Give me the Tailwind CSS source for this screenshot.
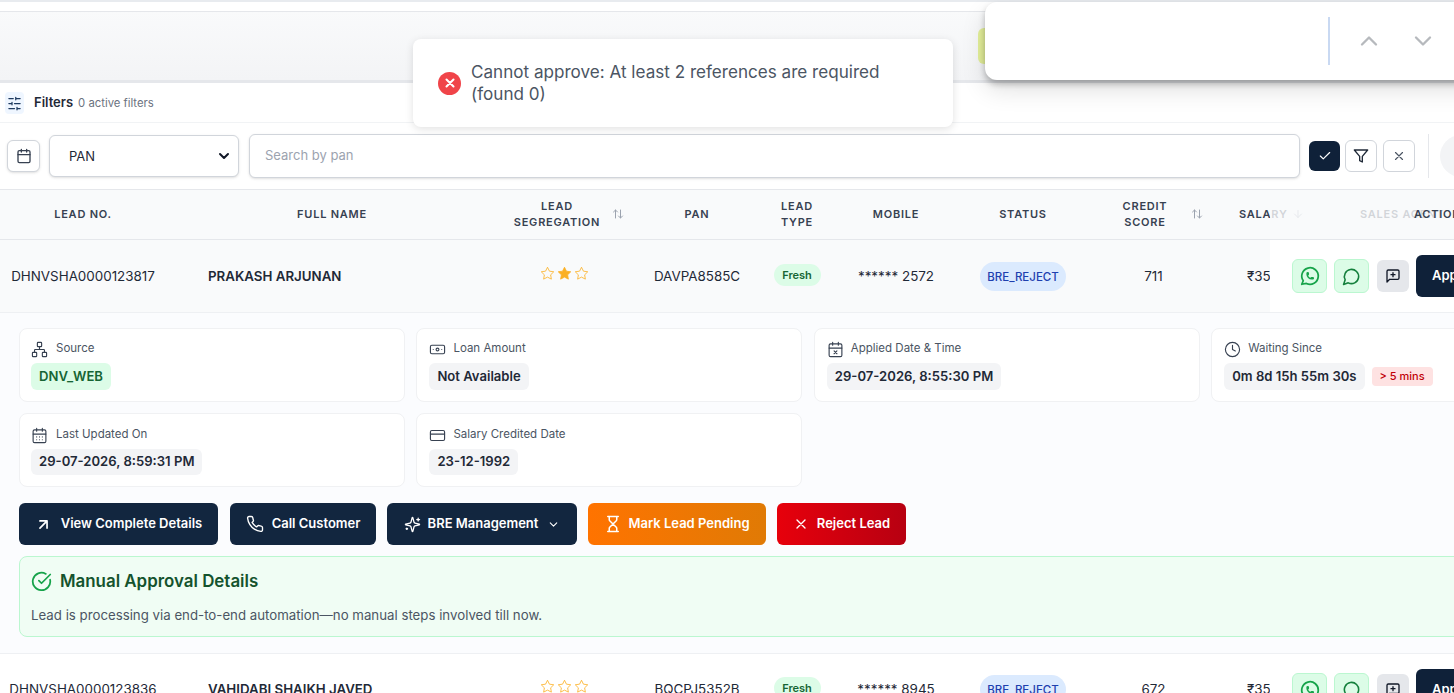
<!DOCTYPE html>
<html lang="en">
<head>
  <meta charset="UTF-8" />
  <meta name="viewport" content="width=device-width, initial-scale=1.0" />
  <title>Leads</title>
  <script src="https://cdn.jsdelivr.net/npm/@tailwindcss/browser@4"></script>
</head>
<body class="bg-white font-['Inter',sans-serif] text-[#1f2937]">
<div class="relative h-[693px] w-[1454px] overflow-hidden">

  <!-- top strip -->
  <div class="h-[2px] bg-[#e8ebef]"></div>
  <div class="h-[10px] border-b border-[#e5e7eb] bg-white"></div>
  <div class="h-[71px] border-b-[3px] border-[#e5e7eb] bg-gradient-to-b from-[#f9fafb] to-[#f3f4f6]"></div>

  <!-- filters bar -->
  <div class="flex h-[40px] items-center gap-[10px] border-b border-[#f1f3f5] pl-[5px] pt-[1px]">
    <span class="flex h-[22px] w-[19px] items-center justify-center rounded bg-[#eff6ff] text-[#1e3a5f]">
      <svg class="h-[15px] w-[15px]" viewBox="0 0 24 24" fill="none" stroke="currentColor" stroke-width="2" stroke-linecap="round"><path d="M21 4h-7M10 4H3M21 12h-9M8 12H3M21 20h-5M12 20H3M14 2v4M8 10v4M16 18v4"/></svg>
    </span>
    <span class="text-[13px] font-semibold text-[#1f2937]">Filters</span>
    <span class="-ml-[5px] text-[11.3px] text-[#6b7280]">0 active filters</span>
  </div>

  <!-- search row -->
  <div class="flex h-[67px] items-center border-b border-[#e5e7eb] pl-[7px]">
    <button class="flex h-[32px] w-[33px] shrink-0 items-center justify-center rounded-md border border-[#d1d5db] bg-white shadow-sm">
      <svg class="h-[16px] w-[16px]" viewBox="0 0 24 24" fill="none" stroke="#374151" stroke-width="2" stroke-linecap="round"><path d="M8 2v4M16 2v4M3 10h18"/><rect x="3" y="4" width="18" height="18" rx="2"/></svg>
    </button>
    <div class="ml-[9px] flex h-[42px] w-[190px] shrink-0 items-center justify-between rounded-md border border-[#d1d5db] bg-white pl-[19px] pr-[6px] shadow-sm">
      <span class="pt-[1px] text-[13px] text-[#1f2937]">PAN</span>
      <svg class="h-[16px] w-[16px]" viewBox="0 0 24 24" fill="none" stroke="#111827" stroke-width="3" stroke-linecap="round" stroke-linejoin="round"><path d="m6 9 6 6 6-6"/></svg>
    </div>
    <div class="ml-[10px] flex h-[44px] w-[1051px] shrink-0 items-center rounded-md border border-[#d1d5db] bg-white pl-[15px] shadow-sm">
      <span class="text-[13px] text-[#9ca3af]">Search by pan</span>
    </div>
    <button class="ml-[9px] flex h-[30px] w-[31px] shrink-0 items-center justify-center rounded-md bg-[#0f2139] text-white">
      <svg class="h-[14px] w-[14px]" viewBox="0 0 24 24" fill="none" stroke="currentColor" stroke-width="2" stroke-linecap="round" stroke-linejoin="round"><path d="M20 6 9 17l-5-5"/></svg>
    </button>
    <button class="ml-[5px] flex h-[32px] w-[32px] shrink-0 items-center justify-center rounded-md border border-[#d1d5db] bg-white">
      <svg class="h-[16px] w-[16px]" viewBox="0 0 24 24" fill="none" stroke="#1f2937" stroke-width="2" stroke-linecap="round" stroke-linejoin="round"><polygon points="22 3 2 3 10 12.46 10 19 14 21 14 12.46 22 3"/></svg>
    </button>
    <button class="ml-[6px] flex h-[32px] w-[32px] shrink-0 items-center justify-center rounded-md border border-[#d1d5db] bg-white">
      <svg class="h-[14px] w-[14px]" viewBox="0 0 24 24" fill="none" stroke="#4b5563" stroke-width="2" stroke-linecap="round"><path d="M18 6 6 18M6 6l12 12"/></svg>
    </button>
    <div class="ml-[13px] h-[44px] w-px shrink-0 bg-[#e5e7eb]"></div>
    <div class="ml-[11px] h-[42px] w-[42px] shrink-0 rounded-full bg-[#f3f4f6]"></div>
  </div>

  <!-- table head -->
  <div class="relative flex h-[50px] items-center border-b border-[#e5e7eb] bg-[#f9fafb] pb-[2px] text-center text-[11px] font-semibold uppercase leading-[16px] tracking-[0.07em] text-[#374151]">
    <div class="w-[166px]">Lead No.</div>
    <div class="w-[332px]">Full Name</div>
    <div class="flex w-[142px] items-center">
      <div class="ml-[8px] w-[102px]">Lead<br>Segregation</div>
      <svg class="ml-[4px] h-[12px] w-[12px] text-[#9ca3af]" viewBox="0 0 24 24" fill="none" stroke="currentColor" stroke-width="2" stroke-linecap="round" stroke-linejoin="round"><path d="m21 16-4 4-4-4M17 20V4M3 8l4-4 4 4M7 4v16"/></svg>
    </div>
    <div class="w-[114px]">Pan</div>
    <div class="w-[86px]">Lead<br>Type</div>
    <div class="w-[112px]">Mobile</div>
    <div class="w-[142px]">Status</div>
    <div class="flex w-[121px] items-center">
      <div class="ml-[21px] w-[60px]">Credit<br>Score</div>
      <svg class="ml-[16px] h-[12px] w-[12px] text-[#9ca3af]" viewBox="0 0 24 24" fill="none" stroke="currentColor" stroke-width="2" stroke-linecap="round" stroke-linejoin="round"><path d="m21 16-4 4-4-4M17 20V4M3 8l4-4 4 4M7 4v16"/></svg>
    </div>
    <div class="ml-[24px] flex w-[121px] shrink-0 items-center gap-[4px]">Salary
      <svg class="h-[12px] w-[12px] text-[#9ca3af]" viewBox="0 0 24 24" fill="none" stroke="currentColor" stroke-width="2" stroke-linecap="round" stroke-linejoin="round"><path d="M12 5v14M19 12l-7 7-7-7"/></svg>
    </div>
    <div class="shrink-0 whitespace-nowrap">Sales Agent</div>
    <div class="absolute inset-y-0 left-[1270px] right-0 bg-[#f9fafb]/80"></div>
    <div class="absolute left-[1414px] top-[16px] text-[#374151]">Action</div>
  </div>

  <!-- row 1 -->
  <div class="relative flex h-[73px] items-center border-b border-[#eef0f3] bg-[#f9fafb] pt-[1px] text-[13.4px] text-[#1f2937]">
    <div class="w-[166px] text-center">DHNVSHA0000123817</div>
    <div class="w-[332px] pl-[42px] text-[13.3px] font-semibold">PRAKASH ARJUNAN</div>
    <div class="flex w-[142px] justify-center gap-[2px] pb-[6px] pr-[10px] text-[#fbb024]">
      <svg class="h-[15px] w-[15px]" viewBox="0 0 24 24" fill="none" stroke="currentColor" stroke-width="1.3" stroke-linejoin="round"><polygon points="12 2 15.09 8.26 22 9.27 17 14.14 18.18 21.02 12 17.77 5.82 21.02 7 14.14 2 9.27 8.91 8.26 12 2"/></svg>
      <svg class="h-[15px] w-[15px]" viewBox="0 0 24 24" fill="currentColor" stroke="currentColor" stroke-width="1.3" stroke-linejoin="round"><polygon points="12 2 15.09 8.26 22 9.27 17 14.14 18.18 21.02 12 17.77 5.82 21.02 7 14.14 2 9.27 8.91 8.26 12 2"/></svg>
      <svg class="h-[15px] w-[15px]" viewBox="0 0 24 24" fill="none" stroke="currentColor" stroke-width="1.3" stroke-linejoin="round"><polygon points="12 2 15.09 8.26 22 9.27 17 14.14 18.18 21.02 12 17.77 5.82 21.02 7 14.14 2 9.27 8.91 8.26 12 2"/></svg>
    </div>
    <div class="w-[114px] text-center">DAVPA8585C</div>
    <div class="flex w-[86px] justify-center pb-[3px]"><span class="flex h-[22px] w-[47px] items-center justify-center rounded-full bg-[#dcfce7] text-[11px] font-semibold text-[#166534]">Fresh</span></div>
    <div class="w-[112px] text-center">****** 2572</div>
    <div class="flex w-[142px] justify-center"><span class="flex h-[29px] w-[86px] items-center justify-center rounded-full bg-[#dbeafe] pt-[2px] text-[11.5px] font-medium text-[#1e40af]">BRE_REJECT</span></div>
    <div class="w-[121px] pr-[2px] text-center">711</div>
    <div class="ml-[32px] shrink-0">₹35,000</div>
    <div class="absolute inset-y-0 left-[1270px] right-0 flex items-center bg-white pl-[22px]">
      <span class="flex h-[34px] w-[35px] shrink-0 items-center justify-center rounded-md border border-[#bbf7d0] bg-[#dcfce7] text-[#16a34a]">
        <svg class="h-[22px] w-[22px]" viewBox="0 0 24 24" fill="none" stroke="currentColor" stroke-width="1.9" stroke-linecap="round" stroke-linejoin="round"><path d="M3 21l1.65-3.8a9 9 0 1 1 3.4 2.9L3 21"/><path d="M9 10a.5.5 0 0 0 1 0V9a.5.5 0 0 0-1 0v1a5 5 0 0 0 5 5h1a.5.5 0 0 0 0-1h-1a.5.5 0 0 0 0 1"/></svg>
      </span>
      <span class="ml-[7px] flex h-[34px] w-[35px] shrink-0 items-center justify-center rounded-md border border-[#bbf7d0] bg-[#dcfce7] text-[#15803d]">
        <svg class="h-[19px] w-[19px]" viewBox="0 0 24 24" fill="none" stroke="currentColor" stroke-width="2" stroke-linecap="round" stroke-linejoin="round"><path d="M7.9 20A9 9 0 1 0 4 16.1L2 22Z"/></svg>
      </span>
      <span class="ml-[8px] flex h-[32px] w-[32px] shrink-0 items-center justify-center rounded-md bg-[#e5e7eb] text-[#111827]">
        <svg class="h-[16px] w-[16px]" viewBox="0 0 24 24" fill="none" stroke="currentColor" stroke-width="2" stroke-linecap="round" stroke-linejoin="round"><path d="M21 15a2 2 0 0 1-2 2H7l-4 4V5a2 2 0 0 1 2-2h14a2 2 0 0 1 2 2z"/><path d="M12 7v6M9 10h6"/></svg>
      </span>
      <span class="ml-[7px] flex h-[42px] w-[90px] shrink-0 items-center rounded-md bg-[#0f2139] pl-[16px] text-[13px] font-semibold text-white">Approve</span>
    </div>
  </div>

  <!-- expanded details -->
  <div class="h-[341px] border-b border-[#eef0f3] bg-[#fbfcfe] pl-[19px] pt-[15px]">
    <div class="grid w-[1578px] grid-cols-[386px_386px_386px_386px] gap-x-[11.4px] gap-y-[11px]">
      <div class="h-[74px] rounded-lg border border-[#f0f1f3] bg-white pl-[11px] pt-[11px]">
        <div class="flex h-[18px] items-center gap-[8px] text-[11.5px] text-[#4b5563]">
          <svg class="h-[17px] w-[17px]" viewBox="0 0 24 24" fill="none" stroke="#374151" stroke-width="1.6" stroke-linecap="round" stroke-linejoin="round"><rect x="16" y="16" width="6" height="6" rx="1"/><rect x="2" y="16" width="6" height="6" rx="1"/><rect x="9" y="2" width="6" height="6" rx="1"/><path d="M5 16v-3a1 1 0 0 1 1-1h12a1 1 0 0 1 1 1v3M12 12V8"/></svg>
          Source
        </div>
        <span class="mt-[5px] inline-flex h-[27px] items-center rounded-md bg-[#dcfce7] px-[8px] text-[13.1px] font-semibold text-[#166534]">DNV_WEB</span>
      </div>
      <div class="h-[74px] rounded-lg border border-[#f0f1f3] bg-white pl-[12px] pt-[11px]">
        <div class="flex h-[18px] items-center gap-[7px] text-[11.5px] text-[#4b5563]">
          <svg class="h-[17px] w-[17px]" viewBox="0 0 24 24" fill="none" stroke="#374151" stroke-width="1.6" stroke-linecap="round" stroke-linejoin="round"><rect x="2" y="6" width="20" height="12" rx="2"/><circle cx="12" cy="12" r="2"/><path d="M6 12h.01M18 12h.01"/></svg>
          Loan Amount
        </div>
        <span class="mt-[5px] inline-flex h-[27px] items-center rounded-md bg-[#f3f4f6] px-[8px] text-[13.1px] font-semibold">Not Available</span>
      </div>
      <div class="h-[74px] rounded-lg border border-[#f0f1f3] bg-white pl-[12px] pt-[11px]">
        <div class="flex h-[18px] items-center gap-[7px] text-[11.5px] text-[#4b5563]">
          <svg class="h-[17px] w-[17px]" viewBox="0 0 24 24" fill="none" stroke="#374151" stroke-width="1.6" stroke-linecap="round" stroke-linejoin="round"><path d="M8 2v4M16 2v4M3 10h18"/><rect x="3" y="4" width="18" height="18" rx="2"/><path d="m14 14-4 4M10 14l4 4"/></svg>
          Applied Date &amp; Time
        </div>
        <span class="mt-[5px] inline-flex h-[27px] items-center rounded-md bg-[#f3f4f6] px-[8px] text-[13.1px] font-semibold">29-07-2026, 8:55:30 PM</span>
      </div>
      <div class="h-[74px] rounded-lg border border-[#f0f1f3] bg-white pl-[12px] pt-[11px]">
        <div class="flex h-[18px] items-center gap-[7px] text-[11.5px] text-[#4b5563]">
          <svg class="h-[17px] w-[17px]" viewBox="0 0 24 24" fill="none" stroke="#374151" stroke-width="1.6" stroke-linecap="round" stroke-linejoin="round"><circle cx="12" cy="12" r="10"/><path d="M12 6v6l4 2"/></svg>
          Waiting Since
        </div>
        <div class="mt-[5px] flex items-center gap-[7px]">
          <span class="inline-flex h-[27px] items-center rounded-md bg-[#f3f4f6] px-[8px] text-[13.1px] font-semibold">0m 8d 15h 55m 30s</span>
          <span class="inline-flex h-[19px] items-center rounded bg-[#fee2e2] px-[8px] text-[11px] font-medium text-[#c10007]">&gt; 5 mins</span>
        </div>
      </div>
      <div class="h-[74px] rounded-lg border border-[#f0f1f3] bg-white pl-[11px] pt-[12px]">
        <div class="flex h-[18px] items-center gap-[8px] text-[11.5px] text-[#4b5563]">
          <svg class="h-[17px] w-[17px]" viewBox="0 0 24 24" fill="none" stroke="#374151" stroke-width="1.6" stroke-linecap="round" stroke-linejoin="round"><path d="M8 2v4M16 2v4M3 10h18"/><rect x="3" y="4" width="18" height="18" rx="2"/><path d="M8 14h.01M12 14h.01M16 14h.01M8 18h.01M12 18h.01M16 18h.01"/></svg>
          Last Updated On
        </div>
        <span class="mt-[5px] inline-flex h-[26px] items-center rounded-md bg-[#f3f4f6] px-[8px] text-[13.1px] font-semibold">29-07-2026, 8:59:31 PM</span>
      </div>
      <div class="h-[74px] rounded-lg border border-[#f0f1f3] bg-white pl-[12px] pt-[12px]">
        <div class="flex h-[18px] items-center gap-[7px] text-[11.5px] text-[#4b5563]">
          <svg class="h-[17px] w-[17px]" viewBox="0 0 24 24" fill="none" stroke="#374151" stroke-width="1.6" stroke-linecap="round" stroke-linejoin="round"><rect x="2" y="5" width="20" height="14" rx="2"/><path d="M2 10h20"/></svg>
          Salary Credited Date
        </div>
        <span class="mt-[5px] inline-flex h-[26px] items-center rounded-md bg-[#f3f4f6] px-[8px] text-[13.1px] font-semibold">23-12-1992</span>
      </div>
    </div>

    <!-- action buttons -->
    <div class="mt-[16px] flex gap-[11px] text-[13px] font-semibold text-white">
      <button class="mr-[1px] flex h-[42px] w-[199px] items-center justify-center gap-[9px] rounded-md bg-[#12263f]">
        <svg class="h-[17px] w-[17px]" viewBox="0 0 24 24" fill="none" stroke="currentColor" stroke-width="2.4" stroke-linecap="round" stroke-linejoin="round"><path d="M7 7h10v10M7 17 17 7"/></svg>
        View Complete Details
      </button>
      <button class="flex h-[42px] w-[146px] items-center justify-center gap-[8px] rounded-md bg-[#12263f]">
        <svg class="h-[18px] w-[18px]" viewBox="0 0 24 24" fill="none" stroke="currentColor" stroke-width="1.8" stroke-linecap="round" stroke-linejoin="round"><path d="M22 16.92v3a2 2 0 0 1-2.18 2 19.79 19.79 0 0 1-8.63-3.07 19.5 19.5 0 0 1-6-6 19.79 19.79 0 0 1-3.07-8.67A2 2 0 0 1 4.11 2h3a2 2 0 0 1 2 1.72 12.84 12.84 0 0 0 .7 2.81 2 2 0 0 1-.45 2.11L8.09 9.91a16 16 0 0 0 6 6l1.27-1.27a2 2 0 0 1 2.11-.45 12.84 12.84 0 0 0 2.81.7A2 2 0 0 1 22 16.92z"/></svg>
        Call Customer
      </button>
      <button class="flex h-[42px] w-[190px] items-center justify-center gap-[7px] rounded-md bg-[#12263f]">
        <svg class="h-[17px] w-[17px]" viewBox="0 0 24 24" fill="none" stroke="currentColor" stroke-width="1.8" stroke-linecap="round" stroke-linejoin="round"><path d="M9.937 15.5A2 2 0 0 0 8.5 14.063l-6.135-1.582a.5.5 0 0 1 0-.962L8.5 9.936A2 2 0 0 0 9.937 8.5l1.582-6.135a.5.5 0 0 1 .963 0L14.063 8.5A2 2 0 0 0 15.5 9.937l6.135 1.581a.5.5 0 0 1 0 .964L15.5 14.063a2 2 0 0 0-1.437 1.437l-1.582 6.135a.5.5 0 0 1-.963 0z"/><path d="M20 3v4M22 5h-4M4 17v2M5 18H3"/></svg>
        BRE Management
        <svg class="ml-[2px] h-[13px] w-[13px]" viewBox="0 0 24 24" fill="none" stroke="currentColor" stroke-width="2" stroke-linecap="round" stroke-linejoin="round"><path d="m6 9 6 6 6-6"/></svg>
      </button>
      <button class="flex h-[42px] w-[178px] items-center justify-center gap-[6px] rounded-md bg-gradient-to-r from-[#ff7300] to-[#e07a05]">
        <svg class="h-[18px] w-[18px]" viewBox="0 0 24 24" fill="none" stroke="currentColor" stroke-width="2" stroke-linecap="round" stroke-linejoin="round"><path d="M5 22h14M5 2h14M17 22v-4.172a2 2 0 0 0-.586-1.414L12 12l-4.414 4.414A2 2 0 0 0 7 17.828V22M7 2v4.172a2 2 0 0 0 .586 1.414L12 12l4.414-4.414A2 2 0 0 0 17 6.172V2"/></svg>
        Mark Lead Pending
      </button>
      <button class="flex h-[42px] w-[129px] items-center justify-center gap-[8px] rounded-md bg-gradient-to-r from-[#e7000b] to-[#b70011]">
        <svg class="h-[16px] w-[16px]" viewBox="0 0 24 24" fill="none" stroke="currentColor" stroke-width="2" stroke-linecap="round"><path d="M18 6 6 18M6 6l12 12"/></svg>
        Reject Lead
      </button>
    </div>

    <!-- manual approval -->
    <div class="mt-[11px] h-[81px] w-[1560px] rounded-lg border border-[#bbf7d0] bg-[#f0fdf4] pl-[11px] pt-[12px]">
      <div class="flex items-center gap-[8px] text-[16.9px] font-semibold text-[#14532d]">
        <svg class="h-[21px] w-[21px] text-[#16a34a]" viewBox="0 0 24 24" fill="none" stroke="currentColor" stroke-width="2" stroke-linecap="round" stroke-linejoin="round"><path d="M21.801 10A10 10 0 1 1 17 3.335"/><path d="m9 11 3 3L22 4"/></svg>
        Manual Approval Details
      </div>
      <p class="mt-[12px] text-[13.25px] text-[#4b5563]">Lead is processing via end-to-end automation—no manual steps involved till now.</p>
    </div>
  </div>

  <!-- row 2 -->
  <div class="relative flex h-[71px] items-center bg-white text-[13.4px] text-[#1f2937]">
    <div class="w-[166px] text-center">DHNVSHA0000123836</div>
    <div class="w-[332px] pl-[42px] text-[13.3px] font-semibold">VAHIDABI SHAIKH JAVED</div>
    <div class="flex w-[142px] justify-center gap-[2px] pb-[6px] pr-[10px] text-[#fbb024]">
      <svg class="h-[15px] w-[15px]" viewBox="0 0 24 24" fill="none" stroke="currentColor" stroke-width="1.3" stroke-linejoin="round"><polygon points="12 2 15.09 8.26 22 9.27 17 14.14 18.18 21.02 12 17.77 5.82 21.02 7 14.14 2 9.27 8.91 8.26 12 2"/></svg>
      <svg class="h-[15px] w-[15px]" viewBox="0 0 24 24" fill="none" stroke="currentColor" stroke-width="1.3" stroke-linejoin="round"><polygon points="12 2 15.09 8.26 22 9.27 17 14.14 18.18 21.02 12 17.77 5.82 21.02 7 14.14 2 9.27 8.91 8.26 12 2"/></svg>
      <svg class="h-[15px] w-[15px]" viewBox="0 0 24 24" fill="none" stroke="currentColor" stroke-width="1.3" stroke-linejoin="round"><polygon points="12 2 15.09 8.26 22 9.27 17 14.14 18.18 21.02 12 17.77 5.82 21.02 7 14.14 2 9.27 8.91 8.26 12 2"/></svg>
    </div>
    <div class="w-[114px] text-center">BQCPJ5352B</div>
    <div class="flex w-[86px] justify-center pb-[3px]"><span class="flex h-[22px] w-[47px] items-center justify-center rounded-full bg-[#dcfce7] text-[11px] font-semibold text-[#166534]">Fresh</span></div>
    <div class="w-[112px] text-center">****** 8945</div>
    <div class="flex w-[142px] justify-center"><span class="flex h-[29px] w-[86px] items-center justify-center rounded-full bg-[#dbeafe] pt-[2px] text-[11.5px] font-medium text-[#1e40af]">BRE_REJECT</span></div>
    <div class="w-[121px] pr-[2px] text-center">672</div>
    <div class="ml-[32px] shrink-0">₹35,000</div>
    <div class="absolute inset-y-0 left-[1270px] right-0 flex items-center bg-white pl-[22px]">
      <span class="flex h-[34px] w-[35px] shrink-0 items-center justify-center rounded-md border border-[#bbf7d0] bg-[#dcfce7] text-[#16a34a]">
        <svg class="h-[22px] w-[22px]" viewBox="0 0 24 24" fill="none" stroke="currentColor" stroke-width="1.9" stroke-linecap="round" stroke-linejoin="round"><path d="M3 21l1.65-3.8a9 9 0 1 1 3.4 2.9L3 21"/><path d="M9 10a.5.5 0 0 0 1 0V9a.5.5 0 0 0-1 0v1a5 5 0 0 0 5 5h1a.5.5 0 0 0 0-1h-1a.5.5 0 0 0 0 1"/></svg>
      </span>
      <span class="ml-[7px] flex h-[34px] w-[35px] shrink-0 items-center justify-center rounded-md border border-[#bbf7d0] bg-[#dcfce7] text-[#15803d]">
        <svg class="h-[19px] w-[19px]" viewBox="0 0 24 24" fill="none" stroke="currentColor" stroke-width="2" stroke-linecap="round" stroke-linejoin="round"><path d="M7.9 20A9 9 0 1 0 4 16.1L2 22Z"/></svg>
      </span>
      <span class="ml-[8px] flex h-[32px] w-[32px] shrink-0 items-center justify-center rounded-md bg-[#e5e7eb] text-[#111827]">
        <svg class="h-[16px] w-[16px]" viewBox="0 0 24 24" fill="none" stroke="currentColor" stroke-width="2" stroke-linecap="round" stroke-linejoin="round"><path d="M21 15a2 2 0 0 1-2 2H7l-4 4V5a2 2 0 0 1 2-2h14a2 2 0 0 1 2 2z"/><path d="M12 7v6M9 10h6"/></svg>
      </span>
      <span class="ml-[7px] flex h-[42px] w-[90px] shrink-0 items-center rounded-md bg-[#0f2139] pl-[16px] text-[13px] font-semibold text-white">Approve</span>
    </div>
  </div>

  <!-- floating panel, top right -->
  <div class="absolute left-[978px] top-[28px] h-[36px] w-[12px] rounded-l-md bg-[#e4f09a]"></div>
  <div class="absolute left-[985px] top-[2px] flex h-[78px] w-[500px] items-center rounded-l-xl bg-white shadow-[0_4px_6px_rgba(0,0,0,0.25),0_10px_24px_rgba(0,0,0,0.12)]">
    <div class="ml-[343px] h-[48px] w-[2px] bg-[#c9d9f2]"></div>
    <svg class="ml-[25px] h-[28px] w-[28px] text-[#b6b9bd]" viewBox="0 0 24 24" fill="none" stroke="currentColor" stroke-width="2" stroke-linecap="round" stroke-linejoin="round"><path d="m18 15-6-6-6 6"/></svg>
    <svg class="ml-[26px] h-[28px] w-[28px] text-[#b6b9bd]" viewBox="0 0 24 24" fill="none" stroke="currentColor" stroke-width="2" stroke-linecap="round" stroke-linejoin="round"><path d="m6 9 6 6 6-6"/></svg>
  </div>

  <!-- error toast -->
  <div class="absolute left-[413px] top-[39px] flex h-[88px] w-[540px] items-center gap-[10px] rounded-lg bg-white pl-[25px] pr-[40px] shadow-[0_2px_8px_rgba(0,0,0,0.12)]">
    <span class="flex h-[23px] w-[23px] shrink-0 items-center justify-center rounded-full bg-[#f04449] text-white">
      <svg class="h-[14px] w-[14px]" viewBox="0 0 24 24" fill="none" stroke="currentColor" stroke-width="3.5" stroke-linecap="round"><path d="M18 6 6 18M6 6l12 12"/></svg>
    </span>
    <p class="text-[17.1px] leading-[22px] text-[#4b5563]">Cannot approve: At least 2 references are required (found 0)</p>
  </div>
</div>
</body>
</html>
